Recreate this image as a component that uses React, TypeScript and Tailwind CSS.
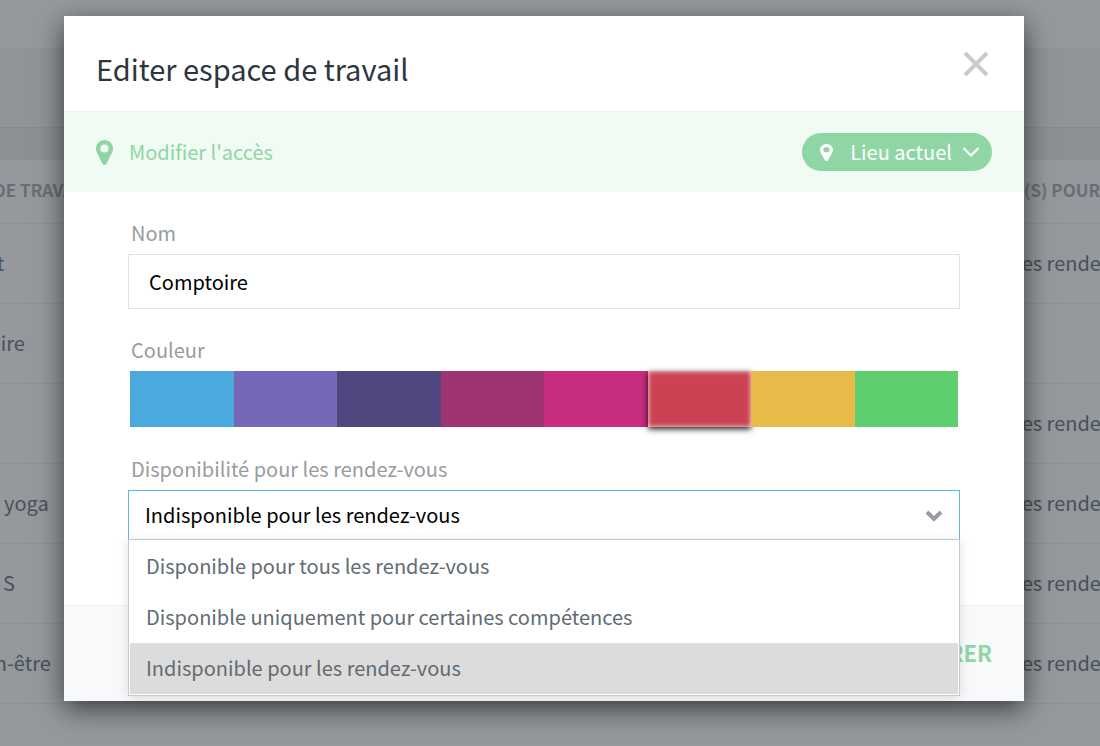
import { useState } from "react"

const colors = [
  { name: "Bleu", bg: "bg-[#4baadd]" },
  { name: "Violet", bg: "bg-[#7568b9]" },
  { name: "Indigo", bg: "bg-[#50477f]" },
  { name: "Prune", bg: "bg-[#9e3472]" },
  { name: "Magenta", bg: "bg-[#c82d80]" },
  { name: "Rouge", bg: "bg-[#cc4255]" },
  { name: "Jaune", bg: "bg-[#e8ba4a]" },
  { name: "Vert", bg: "bg-[#5fce6f]" },
]

const options = [
  "Disponible pour tous les rendez-vous",
  "Disponible uniquement pour certaines compétences",
  "Indisponible pour les rendez-vous",
]

const rows = [
  { name: "Salle Est", skill: "les rendez-vous" },
  { name: "Comptoire", skill: "" },
  { name: "", skill: "les rendez-vous" },
  { name: "Salle de yoga", skill: "les rendez-vous" },
  { name: "Cabinet S", skill: "les rendez-vous" },
  { name: "Spa bien-être", skill: "les rendez-vous" },
]

function Pin({ className }: { className: string }) {
  return (
    <svg viewBox="0 0 17 25" preserveAspectRatio="none" className={className} fill="currentColor" aria-hidden="true">
      <path
        fillRule="evenodd"
        d="M8.5 0C3.8 0 0 3.8 0 8.5c0 1.600.3 2.700.9 4l5.400 11c.4.900 1.200 1.500 2.200 1.500s1.800-.6 2.200-1.500l5.400-11c.6-1.300.9-2.400.9-4C17 3.800 13.200 0 8.500 0zm0 12.600a4.100 4.100 0 1 1 0-8.200 4.100 4.100 0 0 1 0 8.200z"
      />
    </svg>
  )
}

// dimmed page behind the dialog
function Backdrop() {
  return (
    <div className="absolute inset-0 overflow-hidden bg-[#95989d]" aria-hidden="true">
      <div className="h-12"></div>
      <div className="h-20 bg-[#8f9499] border-b border-[#868b8f]"></div>
      <div className="h-8 bg-[#8b9095]"></div>
      {/* the list is scrolled sideways */}
      <div className="-ml-[74px]">
        <table className="w-full table-fixed text-left whitespace-nowrap">
          <thead>
            <tr className="h-[63px] border-b border-[#8d9196] text-[17px] leading-6 text-[#6a6e73]">
              <th className="p-0 pb-0.5 font-bold">ESPACE DE TRAVAIL</th>
              <th className="w-[76px] p-0 pb-0.5 font-bold">(S) POUR</th>
            </tr>
          </thead>
          <tbody className="text-xl text-[#49525a]">
            {rows.map((row, i) => (
              <tr key={i} className="h-20 border-b border-[#8d9196]">
                <td className="p-0">{row.name}</td>
                <td className="p-0"><div className="-ml-2">{row.skill}</div></td>
              </tr>
            ))}
          </tbody>
        </table>
      </div>
    </div>
  )
}

export default function App() {
  const [color, setColor] = useState("Rouge")
  const [availability, setAvailability] = useState(options[2])

  return (
    <div className="relative min-h-screen overflow-hidden py-4 pr-[76px] pl-16 font-['Noto_Sans_CJK_SC',sans-serif]">
      <Backdrop />

      <div
        role="dialog"
        aria-labelledby="dialog-title"
        className="relative bg-white shadow-[0_8px_26px_rgba(0,0,0,0.6)]"
      >
        {/* header */}
        <div className="flex h-[95px] items-center justify-between pl-8 pr-[34px]">
          <h1 id="dialog-title" className="pt-2 text-[29px] leading-9 text-[#2d353e]">Editer espace de travail</h1>
          <button type="button" aria-label="Fermer" className="text-[#cccccc]">
            <svg viewBox="0 0 28 28" className="size-7" fill="none" stroke="currentColor" strokeWidth="4">
              <path d="M3 3l22 22M25 3L3 25" />
            </svg>
          </button>
        </div>

        {/* access bar */}
        <div className="flex h-[81px] items-center justify-between border-t border-[#eaf3ee] bg-[#effbf3] px-8">
          <a href="#" className="flex items-center gap-4 text-xl text-[#8fd6a4]">
            <Pin className="h-[25px] w-[17px]" />
            Modifier l'accès
          </a>
          <button type="button" className="flex h-[38px] items-center rounded-full bg-[#8fd6a4] pl-[18px] pr-3 text-xl text-white">
            <Pin className="mr-[17px] h-[17px] w-[13px]" />
            Lieu actuel
            <svg viewBox="0 0 18 12" className="ml-2.5 h-3 w-[18px]" fill="none" stroke="currentColor" strokeWidth="2.200">
              <path d="M1.500 2L9 9.500 16.500 2" />
            </svg>
          </button>
        </div>

        {/* form */}
        <form className="flex flex-col gap-[27px] px-16 pt-[27px] pb-[65px] text-xl">
          <div className="flex flex-col gap-[7px]">
            <label htmlFor="name" className="pl-[3px] leading-7 text-[#989b9f]">Nom</label>
            <input
              id="name"
              type="text"
              defaultValue="Comptoire"
              className="h-[55px] w-full border border-[#dde3e6] px-5 text-black outline-none"
            />
          </div>

          <fieldset>
            <legend className="mb-[7px] pl-[3px] leading-7 text-[#989b9f]">Couleur</legend>
            <div className="flex px-0.5 pb-px">
              {colors.map((c) => (
                <input
                  key={c.name}
                  type="radio"
                  name="color"
                  aria-label={c.name}
                  checked={color === c.name}
                  onChange={() => setColor(c.name)}
                  className={`${c.bg} relative h-14 flex-1 appearance-none outline-none checked:shadow-[0_2px_6px_rgba(0,0,0,0.9),inset_0_0_5px_rgba(255,255,255,0.9)]`}
                />
              ))}
            </div>
          </fieldset>

          <div className="flex flex-col gap-[7px]">
            <label htmlFor="availability" className="pl-[3px] leading-7 text-[#989b9f]">Disponibilité pour les rendez-vous</label>
            <div className="relative">
              <select
                id="availability"
                value={availability}
                onChange={(e) => setAvailability(e.target.value)}
                className="block h-[50px] w-full appearance-none border border-[#5bb8dc] bg-white px-4 text-black outline-none"
              >
                {options.map((o) => (
                  <option key={o}>{o}</option>
                ))}
              </select>
              <svg viewBox="0 0 18 12" className="pointer-events-none absolute top-5 right-[17px] h-3 w-[18px] text-[#999ca2]" fill="none" stroke="currentColor" strokeWidth="4">
                <path d="M2 2l7 7 7-7" />
              </svg>

              <ul
                role="listbox"
                aria-label="Disponibilité"
                className="absolute inset-x-0 top-[49px] z-10 border border-[#c8cacc] bg-white p-px text-[#626b72] shadow-[0_2px_10px_rgba(0,0,0,0.12)]"
              >
                {options.map((o) => (
                  <li
                    key={o}
                    role="option"
                    aria-selected={o === availability}
                    onClick={() => setAvailability(o)}
                    className="h-[51px] px-4 leading-[50px] aria-selected:bg-[#dcdcdc]"
                  >
                    {o}
                  </li>
                ))}
              </ul>
            </div>
          </div>
        </form>

        {/* footer */}
        <div className="flex h-24 items-center justify-end border-t border-[#eef0f3] bg-[#f7f9fb] px-8 pb-0.5">
          <button type="submit" className="text-[22px] font-bold text-[#8fd6a4]">ENREGISTRER</button>
        </div>
      </div>
    </div>
  )
}
